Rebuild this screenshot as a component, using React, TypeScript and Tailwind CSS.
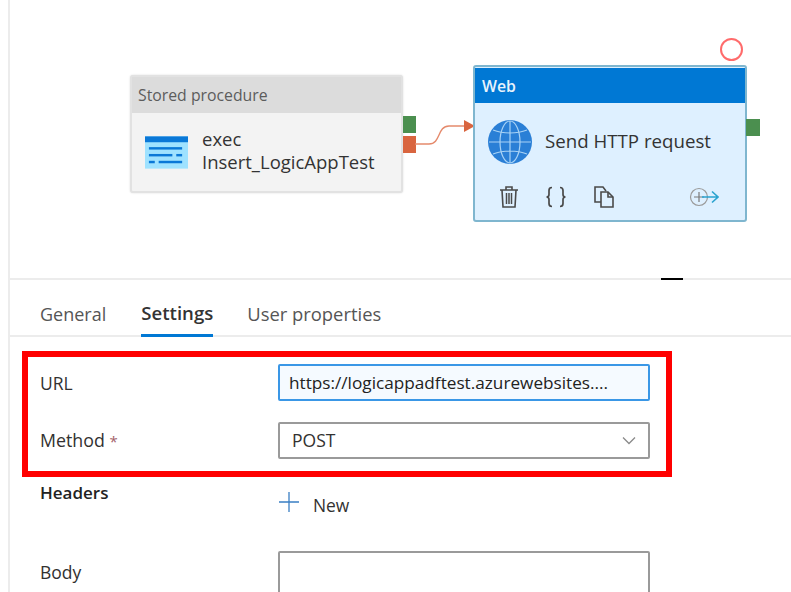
import React from "react";

const Trash = () => (
  <svg width="20" height="24" viewBox="0 0 20 24" fill="none" stroke="#4a4a4a" strokeWidth="1.6">
    <path d="M1 5h18M7 5V2h6v3" />
    <path d="M3 5l1 17h12l1-17" />
    <path d="M7.5 8v11M10 8v11M12.5 8v11" strokeWidth="1.5" />
  </svg>
);

const Braces = () => (
  <svg width="22" height="24" viewBox="0 0 22 24" fill="none" stroke="#4a4a4a" strokeWidth="1.7">
    <path d="M7 2.5C4.5 2.5 4 3.5 4 5.5v4C4 11 3 12 1.5 12 3 12 4 13 4 14.5v4c0 2 .5 3 3 3" />
    <path d="M15 2.5c2.5 0 3 1 3 3v4c0 1.500 1 2.500 2.500 2.500-1.500 0-2.500 1-2.500 2.500v4c0 2-.5 3-3 3" />
  </svg>
);

const Copy = () => (
  <svg width="22" height="24" viewBox="0 0 22 24" fill="none" stroke="#4a4a4a" strokeWidth="1.6">
    <path d="M8 17H2V2h8l3 4" />
    <path d="M8 7h7l5 5v10H8z" fill="#def0ff" />
    <path d="M15 7v5h5" />
  </svg>
);

const Globe = () => (
  <svg width="44" height="44" viewBox="0 0 44 44" fill="none">
    <circle cx="22" cy="22" r="22" fill="#2a7fd6" />
    <g stroke="#a8d2f5" strokeWidth="1.2">
      <ellipse cx="22" cy="22" rx="10" ry="21" />
      <path d="M22 1v42M1 22h42M5 10c10 4 24 4 34 0M5 34c10-4 24-4 34 0" />
    </g>
  </svg>
);

const TableIcon = () => (
  <svg width="43" height="33" viewBox="0 0 44 33">
    <rect x="0" y="0" width="44" height="33" fill="#9fe2ff" />
    <rect x="0" y="0" width="44" height="6" fill="#0a78d7" />
    <g fill="#0a78d7">
      <rect x="4" y="11" width="34" height="2.500" />
      <rect x="4" y="18" width="24" height="2.500" />
      <rect x="32" y="18" width="6" height="2.500" />
      <rect x="4" y="25" width="6" height="2.500" />
      <rect x="14" y="25" width="24" height="2.500" />
    </g>
  </svg>
);

const AddOutput = () => (
  <svg width="30" height="22" viewBox="0 0 30 22" fill="none">
    <circle cx="10" cy="11" r="8.500" stroke="#9a9a9a" strokeWidth="1.2" />
    <path d="M5 11h10M10 6v10" stroke="#7a7a7a" strokeWidth="1.2" />
    <path d="M13 11h16M23 5.500l6 5.500-6 5.500" stroke="#2aa3cf" strokeWidth="1.600" />
  </svg>
);

export default function App() {
  return (
    <div className="w-[791px] h-[592px] overflow-hidden bg-white text-[#323130] font-['Open_Sans','Noto_Sans',sans-serif] pl-2">
      <div className="h-full border-l-2 border-[#ececec]">
        {/* Canvas */}
        <div className="relative h-[278px]">
          {/* Stored procedure node */}
          <div className="absolute left-[120px] top-[75px] w-[273px] h-[118px] rounded-[3px] border-2 border-[#e2e2e2] bg-[#f3f3f3] shadow-[0_0_2px_rgba(0,0,0,0.15)]">
            <div className="h-[36px] bg-[#dcdcdc] flex items-center pl-[6px] pt-[2px] text-[15.8px] text-[#5c5c5c]">
              Stored procedure
            </div>
            <div className="flex items-start pl-[13px] pt-[14px] gap-[14px]">
              <div className="pt-[9px]"><TableIcon /></div>
              <div className="text-[18.5px] leading-[23px] text-[#333]">
                <div>exec</div>
                <div>Insert_LogicAppTest</div>
              </div>
            </div>
          </div>
          <div className="absolute left-[393px] top-[116px] w-[13px] h-[17px] bg-[#4b8f4f]" />
          <div className="absolute left-[393px] top-[136px] w-[13px] h-[17px] bg-[#d9653f]" />

          {/* Connector */}
          <svg className="absolute left-[405px] top-[118px]" width="60" height="30" viewBox="0 0 60 30" fill="none">
            <path d="M0 26h14c12 0 8-18 20-18h16" stroke="#e58a6c" strokeWidth="1.4" />
            <path d="M49 2l11 6-11 6z" fill="#d9653f" />
          </svg>

          {/* Web node */}
          <div className="absolute left-[463px] top-[65px] w-[274px] h-[157px] rounded-[3px] border-2 border-[#7fb6cf] bg-[#def0ff]">
            <div className="h-[35px] mt-[1px] bg-[#0078d4] flex items-center pl-[7px] pt-[2px] text-[15.8px] font-semibold text-[#e8f3fc]">
              Web
            </div>
            <div className="flex items-center pl-[13px] pt-[17px] gap-[13px]">
              <Globe />
              <div className="text-[18.7px] text-[#333] -mt-[2px]">Send HTTP request</div>
            </div>
            <div className="flex items-center pl-[24px] pt-[21px]">
              <Trash />
              <div className="ml-[26px]"><Braces /></div>
              <div className="ml-[26px]"><Copy /></div>
              <div className="ml-[74px]"><AddOutput /></div>
            </div>
          </div>
          <div className="absolute left-[736px] top-[119px] w-[14px] h-[17px] bg-[#4b8f4f]" />

          {/* Red circle */}
          <div className="absolute left-[710px] top-[38px] w-[23px] h-[23px] rounded-full border-2 border-[#ff6b6b] bg-white" />
        </div>

        {/* Divider */}
        <div className="relative h-[2px] bg-[#ececec]">
          <div className="absolute left-[651px] top-0 w-[22px] h-[2px] bg-black" />
        </div>

        {/* Tabs */}
        <div className="h-[57px] border-b-2 border-[#ececec] flex items-end pl-[30px] text-[18px] gap-[34px]">
          <div className="h-[42px] flex items-center text-[#555]">General</div>
          <div className="h-[42px] ml-[1px] flex items-center font-semibold border-b-[3px] border-[#0078d4] -mb-[2px] pb-[3px] text-[#333] text-[18.6px]">
            Settings
          </div>
          <div className="h-[42px] flex items-center text-[#555] text-[18.4px]">User properties</div>
        </div>

        {/* Highlighted fields */}
        <div className="ml-[12px] mt-[14px] w-[650px] h-[126px] border-[6px] border-[#ff0000] pl-[12px] pt-[7px] flex flex-col gap-[21px] text-[17.5px]">
          <div className="flex items-center h-[37px]">
            <div className="w-[238px] pt-[2px]">URL</div>
            <div className="w-[372px] h-[37px] rounded-[2px] border-2 border-[#3a97e6] bg-[#f5faff] flex items-center pl-[9px] text-[17.2px] text-[#222]">
              https://logicappadftest.azurewebsites....
            </div>
          </div>
          <div className="flex items-center h-[37px]">
            <div className="w-[238px] text-[17.8px]">
              Method <span className="text-[15px] text-[#a4626a]">*</span>
            </div>
            <div className="w-[372px] h-[37px] rounded-[2px] border-2 border-[#9a9a9a] flex items-center justify-between pl-[12px] pr-[12px]">
              <span>POST</span>
              <svg width="14" height="9" viewBox="0 0 14 9" fill="none" stroke="#8a8a8a" strokeWidth="1.3">
                <path d="M1 1.500l6 6 6-6" />
              </svg>
            </div>
          </div>
        </div>

        {/* Headers */}
        <div className="flex pl-[30px] text-[17px]">
          <div className="w-[238px] pt-[3px] font-semibold text-[#222]">Headers</div>
          <div className="flex items-start gap-[13px] pt-[14px]">
            <svg width="22" height="22" viewBox="0 0 22 22" fill="none" stroke="#3a7fc4" strokeWidth="1.3">
              <path d="M11 1v20M1 11h20" />
            </svg>
            <span className="text-[17.4px] leading-[26px] pt-[1px]">New</span>
          </div>
        </div>

        {/* Body */}
        <div className="flex pl-[30px] text-[17.5px] mt-[33px]">
          <div className="w-[238px] pt-[8px]">Body</div>
          <div className="w-[372px] h-[60px] rounded-[2px] border-2 border-[#9a9a9a]" />
        </div>
      </div>
    </div>
  );
}
